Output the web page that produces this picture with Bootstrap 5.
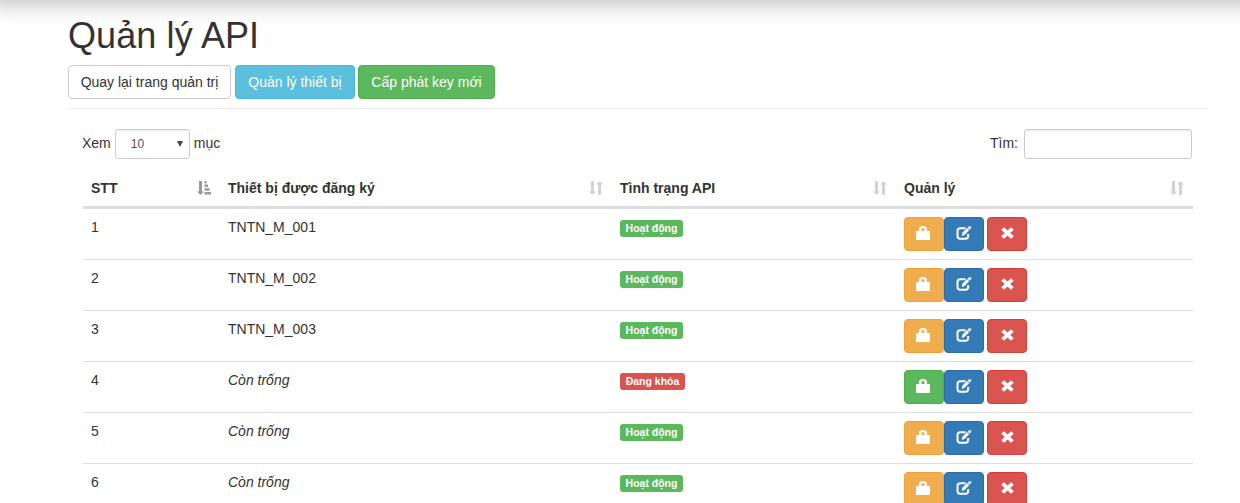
<!DOCTYPE html>
<html lang="vi">
<head>
<meta charset="utf-8">
<title>Quản lý API</title>
<meta name="viewport" content="width=device-width, initial-scale=1">
<link href="https://cdn.jsdelivr.net/npm/bootstrap@5.3.0/dist/css/bootstrap.min.css" rel="stylesheet">
<style>
  body { font: 14px/20px "Liberation Sans", Arial, sans-serif; color: #333; overflow: hidden; height: 503px; }
  .top-shade { position: absolute; top: -50px; left: -15px; right: -30px; height: 50px; box-shadow: 5px 5px 20px rgba(0,0,0,.25); }
  .page { width: 1140px; margin-left: 68px; padding-top: 16px; }
  h1 { font-size: 36px; line-height: 40px; font-weight: 400; margin: 0 0 9px; letter-spacing: .1px; }
  .btn { --bs-btn-font-size: 14px; --bs-btn-line-height: 20px; --bs-btn-padding-x: 0; --bs-btn-border-radius: 4px; height: 34px; white-space: nowrap; --bs-btn-color: #fff; }
  .btn-plain { --bs-btn-color: #333; --bs-btn-bg: #fff; --bs-btn-border-color: #ccc; width: 163px; margin-right: 4px; }
  .btn-sky { --bs-btn-bg: #5bc0de; --bs-btn-border-color: #46b8da; width: 120px; margin-right: 3px; }
  .btn-leaf { --bs-btn-bg: #5cb85c; --bs-btn-border-color: #4cae4c; }
  .btn-amber { --bs-btn-bg: #f0ad4e; --bs-btn-border-color: #eea236; }
  .btn-blue { --bs-btn-bg: #337ab7; --bs-btn-border-color: #2e6da4; }
  .btn-crimson { --bs-btn-bg: #d9534f; --bs-btn-border-color: #d43f3a; margin-left: 3px; }
  .btn-new { width: 137px; }
  .btn-ico { width: 40px; display: flex; align-items: center; justify-content: center; }
  .btn-ico svg { display: block; margin-bottom: 2px; }
  .btn-ico .lock-ico { margin-right: 2px; }
  hr { margin: 9px 0 20px; border-top: 1px solid #eee; opacity: 1; }
  .panel { margin: 0 15px; width: 1110px; }
  .box { height: 30px; border: 1px solid #ccc; border-radius: 3px; box-shadow: inset 0 1px 1px rgba(0,0,0,.075); background: #fff; }
  .length-box { width: 75px; margin: 0 4px; padding: 0 6px 0 15px; font-size: 12px; color: #555; }
  .length-pick { margin-left: -1px; }
  .search-box { width: 168px; margin-left: 6px; margin-right: 1px; outline: 0; }
  .caption { padding-bottom: 2px; }
  .tools { height: 30px; margin-bottom: 11px; }
  .keys { table-layout: fixed; width: 1110px; margin: 0; border-collapse: separate; border-spacing: 0; --bs-table-color: #333; }
  .keys > thead > tr > th { height: 39px; padding: 8px; border: 0; border-bottom: 3px solid #ddd; line-height: 20px; }
  .keys > tbody > tr > td { height: 51px; padding: 8px; border: 0; border-bottom: 1px solid #ddd; vertical-align: top; }
  .sort-ico { display: block; color: #d3d3d3; margin-right: 1px; }
  .sort-on { color: #999; }
  .tag { display: block; width: 63px; height: 17px; margin-top: 3px; border-radius: 3px; color: #fff; background: #5cb85c; font-size: 10.5px; font-weight: 700; line-height: 17px; text-align: center; white-space: nowrap; }
  .tag-off { background: #d9534f; width: 65px; }
</style>
</head>
<body>
<svg width="0" height="0" class="position-absolute" aria-hidden="true">
  <symbol id="lock" viewBox="0 0 14 14"><path fill="currentColor" fill-rule="evenodd" d="M3 5V3Q3 2 3.700 1.300L4.300.7Q5 0 6 0H8Q9 0 9.700.7L10.300 1.300Q11 2 11 3V5H13.300Q14 5 14 5.700V13.300Q14 14 13.300 14H.7Q0 14 0 13.300V5.700Q0 5 .7 5ZM5.500 5H8.500V2.800L7.900 2.200H6.100L5.500 2.800Z"/></symbol>
  <symbol id="edit" viewBox="0 0 16 14"><path fill="none" stroke="currentColor" stroke-width="2" d="M9.500 2.300H4.200Q1.500 2.300 1.500 5V10Q1.500 12.700 4.200 12.700H9.500Q12.200 12.700 12.200 10V8"/><path fill="currentColor" d="M5.700 9.900 6.300 6.800 11 2.100 13.100 4.200 8.500 8.900ZM11.500 1.600 12.600.6H15.600L14.600 2.800 13.600 3.700Z"/></symbol>
  <symbol id="cross" viewBox="0 0 14 14"><path fill="none" stroke="currentColor" stroke-width="4" d="M2.200 2.200 11.800 11.800M11.800 2.200 2.200 11.800"/></symbol>
  <symbol id="sort" viewBox="0 0 14 14"><path fill="currentColor" d="M2 0H5V10.500H7L3.500 14 0 10.500H2ZM9 14H12V3.500H14L10.500 0 7 3.500H9Z"/></symbol>
  <symbol id="sort-asc" viewBox="0 0 14 14"><path fill="currentColor" d="M2 0H5V10.500H7L3.500 14 0 10.500H2ZM7.500 0H9.500V2.400H7.500ZM7.500 3.500H11V6H7.500ZM7.500 7.200H12.500V9.700H7.500ZM7.500 10.900H14V13.400H7.500Z"/></symbol>
</svg>
<div class="top-shade"></div>
<main class="page">
  <h1>Quản lý API</h1>
  <div class="d-flex">
    <a class="btn btn-plain" href="#">Quay lại trang quản trị</a>
    <a class="btn btn-sky" href="#">Quản lý thiết bị</a>
    <a class="btn btn-leaf btn-new" href="#">Cấp phát key mới</a>
  </div>
  <hr>
  <section class="panel">
    <div class="tools d-flex justify-content-between">
      <div class="length-pick d-flex align-items-center"><span class="caption">Xem</span>
        <div class="box length-box d-flex align-items-center justify-content-between"><span>10</span><svg width="6" height="6" viewBox="0 0 7 7"><path fill="#444" d="M0 0H7L3.500 7Z"/></svg></div>
        <span class="caption">mục</span></div>
      <label class="d-flex align-items-center"><span class="caption">Tìm:</span><input class="box search-box" type="search"></label>
    </div>
    <table class="table keys">
      <colgroup><col style="width:137px"><col style="width:392px"><col style="width:284px"><col style="width:297px"></colgroup>
      <thead><tr>
        <th><div class="d-flex justify-content-between align-items-center">STT<svg class="sort-ico sort-on" width="14" height="14"><use href="#sort-asc"/></svg></div></th>
        <th><div class="d-flex justify-content-between align-items-center">Thiết bị được đăng ký<svg class="sort-ico" width="14" height="14"><use href="#sort"/></svg></div></th>
        <th><div class="d-flex justify-content-between align-items-center">Tình trạng API<svg class="sort-ico" width="14" height="14"><use href="#sort"/></svg></div></th>
        <th><div class="d-flex justify-content-between align-items-center">Quản lý<svg class="sort-ico" width="14" height="14"><use href="#sort"/></svg></div></th>
      </tr></thead>
      <tbody id="rows"></tbody>
    </table>
  </section>
</main>
<script src="https://cdn.jsdelivr.net/npm/bootstrap@5.3.0/dist/js/bootstrap.bundle.min.js"></script>
<script>
  const devices = [['TNTN_M_001', true], ['TNTN_M_002', true], ['TNTN_M_003', true], ['', false], ['', true], ['', true]];
  document.getElementById('rows').innerHTML = devices.map(([name, active], i) => `<tr>
    <td>${i + 1}</td>
    <td>${name || '<em>Còn trống</em>'}</td>
    <td><span class="tag ${active ? '' : 'tag-off'}">${active ? 'Hoạt động' : 'Đang khóa'}</span></td>
    <td><div class="d-flex">
      <button class="btn btn-ico ${active ? 'btn-amber' : 'btn-leaf'}" aria-label="Khóa"><svg class="lock-ico" width="14" height="14"><use href="#lock"/></svg></button>
      <button class="btn btn-ico btn-blue" aria-label="Sửa"><svg width="16" height="14"><use href="#edit"/></svg></button>
      <button class="btn btn-ico btn-crimson" aria-label="Xóa"><svg width="13" height="12" viewBox="0 0 14 14" preserveAspectRatio="none"><path fill="none" stroke="currentColor" stroke-width="4.200" d="M1.700 1.700 12.300 12.300M12.300 1.700 1.700 12.300"/></svg></button>
    </div></td></tr>`).join('');
</script>
</body>
</html>
